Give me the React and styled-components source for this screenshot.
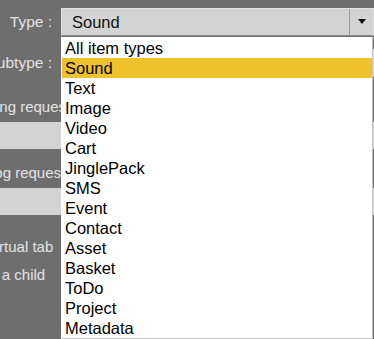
import React from 'react'
import styled, { createGlobalStyle } from 'styled-components'

const GlobalStyle = createGlobalStyle`
  html, body {
    margin: 0;
    padding: 0;
    background: #6e6e6e;
    overflow: hidden;
  }
  body {
    font-family: "Liberation Sans", Arial, sans-serif;
    font-size: 16.5px;
  }
`

const itemTypes = [
  'All item types', 'Sound', 'Text', 'Image', 'Video', 'Cart', 'JinglePack',
  'SMS', 'Event', 'Contact', 'Asset', 'Basket', 'ToDo', 'Project', 'Metadata',
]

const App = () => {
  return (
    <>
      <GlobalStyle />
      <Screen>
        <Panel>
          <FieldRow>
            <Label>Type :</Label>
            <SelectWrap>
              <Select>
                <SelectValue>Sound</SelectValue>
                <ArrowButton>
                  <svg width="8" height="5" viewBox="0 0 8 5">
                    <polygon points="0,0 8,0 4,5" fill="#111" />
                  </svg>
                </ArrowButton>
              </Select>
              <Menu>
                {itemTypes.map((t) => (
                  <MenuItem key={t} $active={t === 'Sound'}>{t}</MenuItem>
                ))}
              </Menu>
            </SelectWrap>
          </FieldRow>

          <FieldRow $gap={13}>
            <Label>Subtype :</Label>
            <Select>
              <SelectValue />
            </Select>
          </FieldRow>

          <Block $gap={20}>
            <BlockLabel>Ping request</BlockLabel>
            <Box />
          </Block>

          <Block $gap={14}>
            <BlockLabel>Log requests</BlockLabel>
            <Box />
          </Block>

          <CheckList>
            <CheckRow>Virtual tab</CheckRow>
            <CheckRow>Is a child</CheckRow>
          </CheckList>
        </Panel>
      </Screen>
    </>
  )
}

const Screen = styled.div`
  width: 374px;
  height: 339px;
  overflow: hidden;
  background: #6e6e6e;
`

const Panel = styled.div`
  display: flex;
  flex-direction: column;
  margin-left: -14px;
  padding-top: 8px;
`

const FieldRow = styled.div`
  display: grid;
  grid-template-columns: 75px 1fr;
  align-items: center;
  height: 28px;
  margin-top: ${({ $gap }) => ($gap ? `${$gap}px` : 0)};
`

const Label = styled.div`
  text-align: right;
  padding-right: 9px;
  color: #e4e4e4;
  font-size: 15.5px;
  white-space: nowrap;
`

const SelectWrap = styled.div`
  position: relative;
  height: 100%;
`

const Select = styled.div`
  display: flex;
  height: 28px;
  box-sizing: border-box;
  background: #d3d3d3;
  border-top: 1px solid #e2e2e2;
  border-left: 1px solid #dcdcdc;
  border-bottom: 1px solid #8c8c8c;
  border-right: 1px solid #dedede;
`

const SelectValue = styled.div`
  flex: 1;
  padding-left: 10px;
  line-height: 26px;
  color: #111;
`

const ArrowButton = styled.div`
  width: 23px;
  border-left: 1px solid #9a9a9a;
  display: flex;
  align-items: center;
  justify-content: center;
  padding-bottom: 1px;
`

const Menu = styled.div`
  position: absolute;
  top: 29px;
  left: 0;
  right: 1px;
  z-index: 5;
  background: #fff;
  border: 1px solid #c4c4c4;
  border-top-color: #fff;
  border-left-color: #fff;
  display: flex;
  flex-direction: column;
`

const MenuItem = styled.div`
  height: 20px;
  line-height: 20px;
  padding-left: 3px;
  color: #000;
  background: ${({ $active }) => ($active ? '#eec12d' : 'transparent')};
  white-space: nowrap;
`

const Block = styled.div`
  display: flex;
  flex-direction: column;
  gap: 5px;
  margin-top: ${({ $gap }) => `${$gap}px`};
`

const BlockLabel = styled.div`
  line-height: 20px;
  font-size: 15px;
  color: #e4e4e4;
  white-space: nowrap;
`

const Box = styled.div`
  height: 27px;
  background: #d3d3d3;
`

const CheckList = styled.div`
  display: flex;
  flex-direction: column;
  margin-top: 18px;
`

const CheckRow = styled.div`
  height: 28px;
  line-height: 28px;
  font-size: 15px;
  color: #e4e4e4;
  white-space: nowrap;
`

export default App
